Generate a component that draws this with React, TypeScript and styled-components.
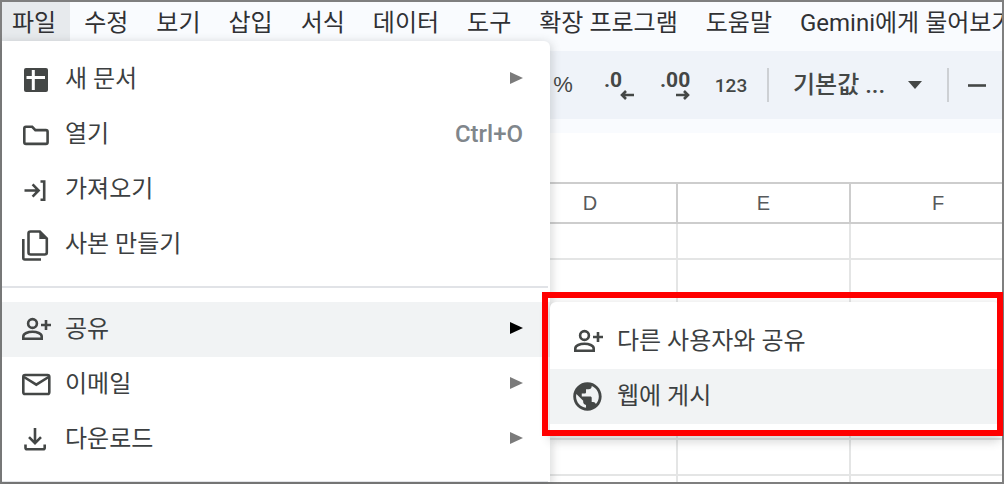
import React from "react";
import styled, { createGlobalStyle } from "styled-components";

const GlobalStyle = createGlobalStyle`
  *, *::before, *::after { box-sizing: border-box; }
  body {
    margin: 0;
    background: #fff;
    color: #303134;
    font-family: Roboto, "Noto Sans CJK KR", sans-serif;
    font-size: 24px;
  }
  button, select { font: inherit; color: inherit; border: 0; background: none; margin: 0; padding: 0; }
`;

const Frame = styled.div`
  position: relative;
  display: flex;
  flex-direction: column;
  height: 100vh;
  border: 2px solid #7f7f7f;
  background: #fff;
`;

const MenuBar = styled.nav`
  display: flex;
  align-items: flex-start;
  flex: none;
  height: 49px;
  background: #f9fbfe;
  overflow: hidden;
`;

const MenuBarItem = styled.button<{ $open?: boolean }>`
  flex: none;
  height: 39px;
  padding: 2px 14px 0 ${(p) => (p.$open ? "10px" : "14px")};
  line-height: 38px;
  white-space: nowrap;
  background: ${(p) => (p.$open ? "#e7eaed" : "transparent")};
`;

const Toolbar = styled.div`
  display: flex;
  align-items: center;
  flex: none;
  gap: 16px;
  height: 68px;
  padding-left: 541px;
  background: #eff3f9;
  color: #444746;
  overflow: hidden;
`;

const ToolButton = styled.button<{ $narrow?: boolean }>`
  display: flex;
  align-items: center;
  justify-content: center;
  flex: none;
  width: ${(p) => (p.$narrow ? "24px" : "40px")};
  height: 40px;
  font-size: 19px;
  font-weight: 500;
`;

const Percent = styled.span`
  font-family: "Liberation Sans", sans-serif;
  font-size: 22px;
  font-weight: 400;
`;

const Decimal = styled.span`
  display: flex;
  flex-direction: column;
  width: 30px;
  font-size: 21px;
  font-weight: 700;
  line-height: 20px;
  text-align: left;

  svg { align-self: flex-end; }
`;

const Divider = styled.span`
  flex: none;
  width: 2px;
  height: 34px;
  background: #cdd0d4;
`;

const FontPicker = styled.label`
  display: flex;
  align-items: center;
  flex: none;
  width: 146px;
  padding: 0 9px 0 8px;

  svg { flex: none; pointer-events: none; }
`;

const FontSelect = styled.select`
  appearance: none;
  flex: 1;
  min-width: 0;
  height: 40px;
  font-weight: 500;
  outline: 0;
`;

const FormulaBar = styled.div`
  flex: none;
  height: 63px;
  border-top: 14px solid #f9fbfe;
  background: #fff;
`;

const SheetArea = styled.main`
  flex: 1;
  min-height: 0;
  overflow: hidden;
`;

const Sheet = styled.table`
  table-layout: fixed;
  width: 1025px;
  border-collapse: separate;
  border-spacing: 0;
`;

const HeadCell = styled.th`
  height: 42px;
  padding: 0;
  border: solid #cdcdcd;
  border-width: 2px 2px 2px 0;
  color: #575a5c;
  font-family: "Liberation Sans", sans-serif;
  font-size: 20px;
  font-weight: 400;
`;

const Cell = styled.td`
  height: 36px;
  padding: 0;
  border: solid #e4e5e5;
  border-width: 0 2px 2px 0;
`;

const MenuPanel = styled.div`
  position: absolute;
  top: 39px;
  bottom: 0;
  left: 0;
  width: 548px;
  padding-top: 11px;
  border-radius: 0 6px 0 0;
  background: #fff;
  box-shadow: 0 3px 10px 2px rgba(60, 64, 67, 0.2);
  overflow: hidden;
`;

const SubmenuPanel = styled.div`
  position: absolute;
  top: 300px;
  left: 548px;
  right: 2px;
  padding: 12px 0;
  border-radius: 6px;
  background: #fff;
  box-shadow: 0 4px 10px 2px rgba(60, 64, 67, 0.2);
`;

const MenuRow = styled.button<{ $active?: boolean; $nested?: boolean }>`
  display: flex;
  align-items: center;
  gap: 12px;
  width: 100%;
  height: 55px;
  padding: 0 27px 0 ${(p) => (p.$nested ? "22px" : "18px")};
  background: ${(p) => (p.$active ? "#f1f3f4" : "transparent")};
  color: #3c3f41;
  line-height: 55px;
  text-align: left;
  white-space: nowrap;

  svg { flex: none; }
`;

const RowLabel = styled.span`
  flex: 1;
`;

const Shortcut = styled.span`
  color: #80868b;
  font-weight: 500;
`;

const Separator = styled.hr`
  height: 2px;
  margin: 14px 2px 14px 0;
  border: 0;
  background: #e1e3e7;
`;

const Highlight = styled.div`
  position: absolute;
  top: 290px;
  left: 540px;
  right: -1px;
  height: 144px;
  border: 6px solid #ff0000;
  pointer-events: none;
`;

type IconName = "sheet" | "folder" | "import" | "copy" | "person" | "mail" | "download" | "globe";

const INK = "#444746";

const iconShapes: Record<IconName, React.ReactNode> = {
  sheet: (
    <>
      <rect x="4" y="5" width="24" height="24" rx="2" fill={INK} stroke="none" />
      <path d="M13.3 7v20M6.500 14.500h18.500" stroke="#fff" strokeWidth="3" />
    </>
  ),
  folder: (
    <path d="M4.3 10.4a1.6 1.6 0 0 1 1.6-1.6h6.3l3.2 3.3h10.5a1.7 1.7 0 0 1 1.7 1.7v10.4a1.7 1.7 0 0 1-1.7 1.7H6a1.7 1.7 0 0 1-1.7-1.7z" />
  ),
  import: <path d="M4.5 17.5h13M12.6 11.4l6 6.1-6 6.1M20.5 8.5h3.7v18.2h-3.7" />,
  copy: (
    <>
      <path d="M10.5 3.5h9.3l7 7v14a2 2 0 0 1-2 2H10.500a2 2 0 0 1-2-2v-19a2 2 0 0 1 2-2z" />
      <path d="M19.300 3.500v7.500h7.500z" fill={INK} stroke="none" />
      <path d="M3.300 11v19a1.500 1.500 0 0 0 1.500 1.500H21" />
    </>
  ),
  person: (
    <>
      <circle cx="12.500" cy="10.500" r="4.400" />
      <path d="M3.300 25.700v-2.200c0-3.100 4.800-4.700 9.200-4.700s9.200 1.600 9.200 4.700v2.200z" />
      <path d="M26 7v10M21 12h10" />
    </>
  ),
  mail: (
    <>
      <rect x="3.300" y="7" width="26" height="19" rx="1.800" />
      <path d="M4 9l12.300 7.700L28.600 9" />
    </>
  ),
  download: <path d="M15 5v15M9 14.200l6 6 6-6M5.500 21.500v3.300a1.500 1.500 0 0 0 1.500 1.500h16.200a1.500 1.500 0 0 0 1.500-1.500V21.500" />,
  globe: (
    <path
      transform="translate(-1.600 -.600) scale(1.420)"
      fill={INK}
      stroke="none"
      d="M12 2C6.480 2 2 6.480 2 12s4.480 10 10 10 10-4.480 10-10S17.520 2 12 2zm-1 17.930c-3.950-.490-7-3.850-7-7.930 0-.620.080-1.210.210-1.790L9 15v1c0 1.100.900 2 2 2v1.930zm6.900-2.540c-.260-.810-1-1.390-1.900-1.390h-1v-3c0-.550-.450-1-1-1H8v-2h2c.550 0 1-.450 1-1V7h2c1.100 0 2-.900 2-2v-.410c2.930 1.190 5 4.060 5 7.410 0 2.080-.800 3.970-2.100 5.390z"
    />
  ),
};

function Icon({ name }: { name: IconName }) {
  return (
    <svg width="33" height="33" viewBox="0 0 33 33" fill="none" stroke={INK} strokeWidth="2.6" aria-hidden="true">
      {iconShapes[name]}
    </svg>
  );
}

function SubmenuArrow({ active }: { active?: boolean }) {
  return (
    <svg width="13" height="15" viewBox="0 0 13 15" aria-hidden="true">
      <path d="M0 0l13 6-13 6z" fill={active ? "#000" : "#7b7b7b"} />
    </svg>
  );
}

function SmallArrow({ right }: { right?: boolean }) {
  return (
    <svg width="14" height="10" viewBox="0 0 14 10" fill="none" stroke={INK} strokeWidth="2.6" aria-hidden="true">
      <path d={right ? "M0 5h12M8 1l4 4-4 4" : "M14 5H2M6 1L2 5l4 4"} />
    </svg>
  );
}

const menus = ["파일", "수정", "보기", "삽입", "서식", "데이터", "도구", "확장 프로그램", "도움말", "Gemini에게 물어보기"];

interface Entry {
  icon: IconName;
  label: string;
  shortcut?: string;
  submenu?: boolean;
  active?: boolean;
}

const fileGroups: Entry[][] = [
  [
    { icon: "sheet", label: "새 문서", submenu: true },
    { icon: "folder", label: "열기", shortcut: "Ctrl+O" },
    { icon: "import", label: "가져오기" },
    { icon: "copy", label: "사본 만들기" },
  ],
  [
    { icon: "person", label: "공유", submenu: true, active: true },
    { icon: "mail", label: "이메일", submenu: true },
    { icon: "download", label: "다운로드", submenu: true },
  ],
];

const shareEntries: Entry[] = [
  { icon: "person", label: "다른 사용자와 공유" },
  { icon: "globe", label: "웹에 게시", active: true },
];

function Row({ entry, nested }: { entry: Entry; nested?: boolean }) {
  return (
    <MenuRow role="menuitem" $active={entry.active} $nested={nested}>
      <Icon name={entry.icon} />
      <RowLabel>{entry.label}</RowLabel>
      {entry.shortcut && <Shortcut>{entry.shortcut}</Shortcut>}
      {entry.submenu && <SubmenuArrow active={entry.active} />}
    </MenuRow>
  );
}

export default function App() {
  return (
    <>
      <GlobalStyle />
      <Frame>
        <MenuBar>
          {menus.map((label, i) => (
            <MenuBarItem key={label} $open={i === 0}>
              {label}
            </MenuBarItem>
          ))}
        </MenuBar>

        <Toolbar>
          <ToolButton>
            <Percent>%</Percent>
          </ToolButton>
          <ToolButton>
            <Decimal>
              .0
              <SmallArrow />
            </Decimal>
          </ToolButton>
          <ToolButton>
            <Decimal>
              .00
              <SmallArrow right />
            </Decimal>
          </ToolButton>
          <ToolButton>123</ToolButton>
          <Divider />
          <FontPicker>
            <FontSelect aria-label="글꼴">
              <option>기본값 ...</option>
            </FontSelect>
            <svg width="14" height="8" viewBox="0 0 14 8" aria-hidden="true">
              <path d="M0 0h14L7 8z" fill={INK} />
            </svg>
          </FontPicker>
          <Divider />
          <ToolButton $narrow aria-label="글꼴 크기 줄이기">
            <svg width="18" height="3" viewBox="0 0 18 3" aria-hidden="true">
              <path d="M0 1.500h18" stroke={INK} strokeWidth="2.600" />
            </svg>
          </ToolButton>
        </Toolbar>

        <FormulaBar />

        <SheetArea>
          <Sheet>
            <colgroup>
              <col style={{ width: 502 }} />
              <col style={{ width: 174 }} />
              <col style={{ width: 173 }} />
              <col />
            </colgroup>
            <thead>
              <tr>
                {["", "D", "E", "F"].map((name) => (
                  <HeadCell key={name}>{name}</HeadCell>
                ))}
              </tr>
            </thead>
            <tbody>
              {Array.from({ length: 8 }, (_, row) => (
                <tr key={row}>
                  <Cell />
                  <Cell />
                  <Cell />
                  <Cell />
                </tr>
              ))}
            </tbody>
          </Sheet>
        </SheetArea>

        <MenuPanel role="menu">
          {fileGroups.map((group, i) => (
            <React.Fragment key={i}>
              {group.map((entry) => (
                <Row key={entry.label} entry={entry} />
              ))}
              <Separator />
            </React.Fragment>
          ))}
        </MenuPanel>

        <SubmenuPanel role="menu">
          {shareEntries.map((entry) => (
            <Row key={entry.label} entry={entry} nested />
          ))}
        </SubmenuPanel>
        <Highlight />
      </Frame>
    </>
  );
}
